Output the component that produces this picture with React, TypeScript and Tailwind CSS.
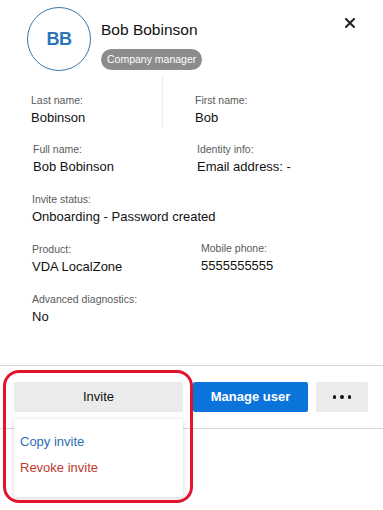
import React from 'react'

interface Field {
  label: string
  value: string
}

const FieldCell: React.FC<Field & { className?: string }> = ({ label, value, className }) => (
  <div className={className}>
    <p className="text-[10.5px] leading-[14px] text-[#5a5a5a]">{label}</p>
    <p className="mt-[2px] text-[13px] leading-[18px] text-[#111]">{value}</p>
  </div>
)

const App: React.FC = () => {
  return (
    <div
      className="relative h-[510px] w-[383px] overflow-hidden bg-white"
      style={{ fontFamily: '"Liberation Sans", Arial, sans-serif' }}
    >
      {/* header */}
      <div className="relative flex h-[76px] pl-[27px] pt-[7px]">
        <div className="flex h-16 w-16 items-center justify-center rounded-full border border-[#3a76a8]">
          <span className="text-[18px] font-bold leading-none tracking-[-0.5px] text-[#2a74b8]">BB</span>
        </div>
        <div className="ml-[10px] flex flex-col items-start">
          <h2 className="mt-[13px] text-[15.5px] leading-[20px] text-[#111]">Bob Bobinson</h2>
          <span className="mt-[9px] h-[21px] rounded-full bg-[#8c8c8c] px-[6px] text-[10.5px] leading-[21px] text-white">
            Company manager
          </span>
        </div>
        <button className="absolute right-[28px] top-[18px] flex h-[10px] w-[10px] items-center justify-center text-[#222]">
          <svg width="10" height="10" viewBox="0 0 10 10">
            <path d="M1 1L9 9M9 1L1 9" stroke="currentColor" strokeWidth="2" strokeLinecap="square" />
          </svg>
        </button>
      </div>

      {/* details */}
      <div className="flex h-[52px]">
        <FieldCell label="Last name:" value="Bobinson" className="w-[163px] border-r border-[#ececec] pl-[31px] pt-[17px]" />
        <FieldCell label="First name:" value="Bob" className="pl-[32px] pt-[17px]" />
      </div>
      <div className="flex h-[50px]">
        <FieldCell label="Full name:" value="Bob Bobinson" className="w-[164px] pl-[33px] pt-[14px]" />
        <FieldCell label="Identity info:" value="Email address: -" className="pl-[33px] pt-[14px]" />
      </div>
      <div className="h-[50px]">
        <FieldCell label="Invite status:" value="Onboarding - Password created" className="pl-[32px] pt-[14px]" />
      </div>
      <div className="flex h-[50px]">
        <FieldCell label="Product:" value="VDA LocalZone" className="w-[169px] pl-[32px] pt-[14px]" />
        <FieldCell label="Mobile phone:" value="5555555555" className="pl-[32px] pt-[13px]" />
      </div>
      <div className="h-[50px]">
        <FieldCell label="Advanced diagnostics:" value="No" className="pl-[32px] pt-[14px]" />
      </div>

      {/* actions */}
      <div className="mt-[37px] flex border-y border-[#d6d6d6] px-[14px] py-[16px]">
        <div className="relative w-[169px]">
          <button className="h-[30px] w-full rounded-[2px] bg-[#ebebeb] text-[13px] text-[#111]">Invite</button>
          <div className="absolute left-0 top-[37px] z-10 flex h-[78px] w-full flex-col rounded-[3px] bg-white pl-[6px] pt-[14px] shadow-[0_1px_5px_rgba(0,0,0,0.18)]">
            <span className="text-[13px] leading-[18px] text-[#2c6db0]">Copy invite</span>
            <span className="mt-[8px] text-[13px] leading-[18px] text-[#c13a2f]">Revoke invite</span>
          </div>
        </div>
        <button className="ml-[10px] h-[30px] w-[115px] rounded-[2px] bg-[#0b74da] text-[13px] font-bold text-white">
          Manage user
        </button>
        <button className="ml-[8px] flex h-[30px] w-[52px] items-center justify-center gap-[4px] rounded-[2px] bg-[#ebebeb]">
          <span className="h-[3.5px] w-[3.5px] rounded-full bg-[#111]" />
          <span className="h-[3.5px] w-[3.5px] rounded-full bg-[#111]" />
          <span className="h-[3.5px] w-[3.5px] rounded-full bg-[#111]" />
        </button>
      </div>

      {/* highlight annotation */}
      <div className="pointer-events-none absolute left-[3px] top-[370px] z-20 h-[133px] w-[190px] rounded-[16px] border-[3px] border-[#e3132c]" />
    </div>
  )
}

export default App
